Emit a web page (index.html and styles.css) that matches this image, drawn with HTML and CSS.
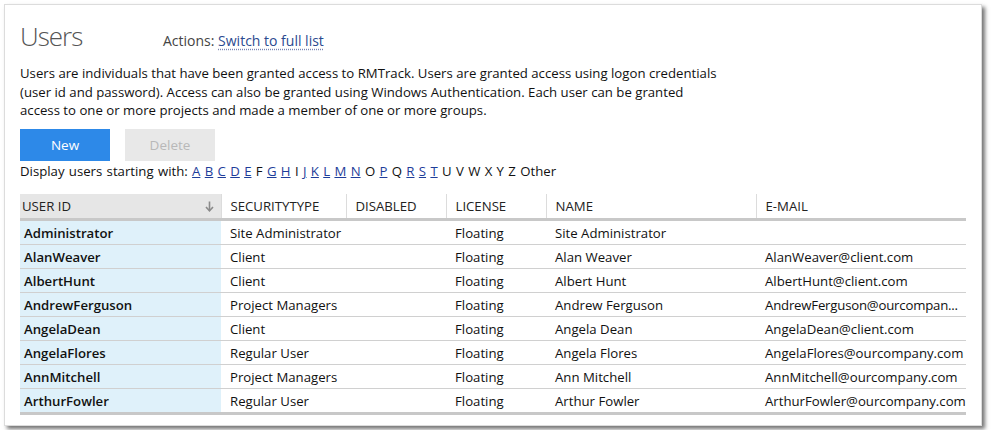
FILE: index.html
```html
<!DOCTYPE html>
<html>
<head>
<meta charset="utf-8">
<link rel="stylesheet" href="styles.css">
</head>
<body>
<div class="card">
  <div class="head">
    <h1 class="title">Users</h1>
    <div class="actions">Actions: <a class="action-link" href="#">Switch to full list</a></div>
  </div>
  <p class="desc">Users are individuals that have been granted access to RMTrack. Users are granted access using logon credentials<br>(user id and password). Access can also be granted using Windows Authentication. Each user can be granted<br>access to one or more projects and made a member of one or more groups.</p>
  <div class="buttons">
    <button class="btn btn-primary">New</button>
    <button class="btn btn-disabled">Delete</button>
  </div>
  <div class="letters">Display users starting with: <a href="#">A</a> <a href="#">B</a> <a href="#">C</a> <a href="#">D</a> <a href="#">E</a> <span>F</span> <a href="#">G</a> <a href="#">H</a> <span>I</span> <a href="#">J</a> <a href="#">K</a> <a href="#">L</a> <a href="#">M</a> <a href="#">N</a> <span>O</span> <a href="#">P</a> <span>Q</span> <a href="#">R</a> <a href="#">S</a> <a href="#">T</a> <span>U</span> <span>V</span> <span>W</span> <span>X</span> <span>Y</span> <span>Z</span> <span>Other</span></div>
  <table class="grid">
    <colgroup>
      <col class="c1"><col class="c2"><col class="c3"><col class="c4"><col class="c5"><col class="c6">
    </colgroup>
    <thead>
      <tr>
        <th class="sorted"><div class="th-inner"><span>USER ID</span><svg class="sort" width="9" height="11" viewBox="0 0 9 11"><path d="M4.5 0.5 V9.5" stroke="#8a8a8a" stroke-width="1.6" fill="none"/><path d="M1 6 L4.5 9.8 L8 6" stroke="#8a8a8a" stroke-width="1.6" fill="none"/></svg></div></th>
        <th>SECURITYTYPE</th>
        <th>DISABLED</th>
        <th>LICENSE</th>
        <th>NAME</th>
        <th>E-MAIL</th>
      </tr>
    </thead>
    <tbody>
      <tr><td class="uid">Administrator</td><td>Site Administrator</td><td></td><td>Floating</td><td>Site Administrator</td><td></td></tr>
      <tr><td class="uid">AlanWeaver</td><td>Client</td><td></td><td>Floating</td><td>Alan Weaver</td><td>AlanWeaver@client.com</td></tr>
      <tr><td class="uid">AlbertHunt</td><td>Client</td><td></td><td>Floating</td><td>Albert Hunt</td><td>AlbertHunt@client.com</td></tr>
      <tr><td class="uid">AndrewFerguson</td><td>Project Managers</td><td></td><td>Floating</td><td>Andrew Ferguson</td><td class="trunc">AndrewFerguson@ourcompan...</td></tr>
      <tr><td class="uid">AngelaDean</td><td>Client</td><td></td><td>Floating</td><td>Angela Dean</td><td>AngelaDean@client.com</td></tr>
      <tr><td class="uid">AngelaFlores</td><td>Regular User</td><td></td><td>Floating</td><td>Angela Flores</td><td>AngelaFlores@ourcompany.com</td></tr>
      <tr><td class="uid">AnnMitchell</td><td>Project Managers</td><td></td><td>Floating</td><td>Ann Mitchell</td><td>AnnMitchell@ourcompany.com</td></tr>
      <tr><td class="uid">ArthurFowler</td><td>Regular User</td><td></td><td>Floating</td><td>Arthur Fowler</td><td>ArthurFowler@ourcompany.com</td></tr>
    </tbody>
  </table>
</div>
</body>
</html>
```

FILE: styles.css
```css
html, body {
  margin: 0;
  padding: 0;
  background: #ffffff;
}
body {
  padding: 4px;
  font-family: "Open Sans", "Noto Sans", "DejaVu Sans", sans-serif;
  color: #1a1a1a;
}
.card {
  box-sizing: border-box;
  width: 978px;
  height: 422px;
  border: 1px solid #dcdcdc;
  background: #fff;
  box-shadow: 3px 3px 4px rgba(0, 0, 0, 0.55);
  padding: 13px 15px 0 15px;
}
.head {
  display: flex;
  align-items: baseline;
  height: 40px;
}
.title {
  margin: 0;
  font-size: 26px;
  font-weight: 300;
  letter-spacing: -1px;
  color: #555;
  line-height: 36px;
  width: 143px;
}
.actions {
  font-size: 14px;
  color: #444;
}
.action-link {
  color: #2b4a8f;
  text-decoration: underline dotted #7a86b3;
  text-underline-offset: 3px;
}
.desc {
  margin: 6px 0 0 0;
  font-size: 13.2px;
  line-height: 18.7px;
  color: #111;
  white-space: nowrap;
}
.buttons {
  display: flex;
  gap: 15px;
  margin-top: 9px;
}
.btn {
  width: 90px;
  height: 32px;
  border: none;
  font-family: inherit;
  font-size: 13.5px;
  padding: 0;
}
.btn-primary {
  background: #2d89e8;
  color: #fff;
}
.btn-disabled {
  background: #e8e8e8;
  color: #b8b8b8;
}
.letters {
  font-size: 13.2px;
  line-height: 18px;
  margin-top: 1px;
  color: #111;
  word-spacing: 0.9px;
}
.letters a {
  color: #1e3d9a;
  text-decoration: underline;
}
.grid {
  margin-top: 14px;
  width: 946px;
  border-collapse: collapse;
  table-layout: fixed;
  font-size: 13.2px;
}
.c1 { width: 201px; }
.c2 { width: 125px; }
.c3 { width: 100px; }
.c4 { width: 100px; }
.c5 { width: 210px; }
.c6 { width: 210px; }
.grid th {
  height: 24px;
  padding: 0 9px;
  text-align: left;
  font-weight: normal;
  color: #222;
  border-left: 1px solid #dcdcdc;
  border-bottom: 3px solid #c8c8c8;
  white-space: nowrap;
}
.grid th.sorted {
  background: #e6e6e6;
  border-left: none;
  padding: 0 7px 0 2px;
}
.th-inner {
  display: flex;
  justify-content: space-between;
  align-items: center;
}
.grid td {
  height: 23px;
  padding: 0 9px;
  border-bottom: 1px solid #d0d0d0;
  white-space: nowrap;
  overflow: hidden;
  color: #111;
}
.grid td.trunc {
  letter-spacing: -0.2px;
}
.grid tbody tr:last-child td {
  border-bottom: 3px solid #c8c8c8;
}
.grid td.uid {
  background: #dff1fa;
  font-weight: 600;
  padding-left: 4px;
}
```
